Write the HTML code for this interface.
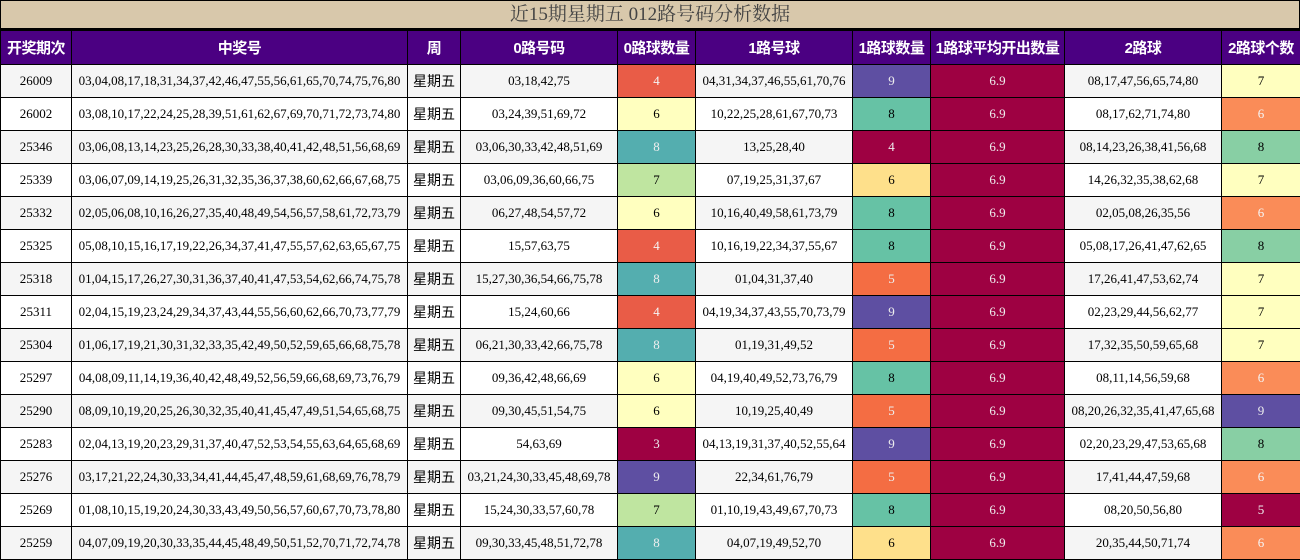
<!DOCTYPE html><html><head><meta charset="utf-8"><style>
body{margin:0;width:1300px;height:560px;overflow:hidden;background:#fff;font-family:"Liberation Serif","Noto Serif CJK SC",serif}
.t{background:#d8c8ab;border:1px solid #000;border-bottom:2px solid #000;box-sizing:border-box;height:30px;text-align:center;font-size:19px;line-height:28px;color:#444}
table{border-collapse:collapse;width:1300px;table-layout:fixed}
td,th{border:1px solid #000;text-align:center;font-size:13px;padding:0;height:32px;white-space:nowrap;overflow:hidden}
th{background:#4b0082;color:#fff;font-size:15px;font-family:"Liberation Sans","Noto Sans CJK SC",sans-serif;height:33px;letter-spacing:-0.5px}
tr:nth-child(even) td{background:#f5f5f5}
td.w{font-size:14px;font-family:"Liberation Sans","Noto Sans CJK SC",sans-serif}
.a{background:#9e0142!important;color:#eee}
.b{background:#e95c47!important;color:#f5f5f5}
.c{background:#ffffbf!important}
.d{background:#bfe5a0!important}
.e{background:#54aeaf!important;color:#eee}
.f{background:#5e4fa2!important;color:#eee}
.g{background:#f46d43!important;color:#eee}
.h{background:#fee08b!important}
.i{background:#66c2a5!important}
.j{background:#fa8c58!important;color:#f5f5f5}
.k{background:#88cfa4!important}
</style></head><body>
<div class="t">近15期星期五 012路号码分析数据</div>
<table>
<colgroup><col style="width:71px"><col style="width:336px"><col style="width:53px"><col style="width:157px"><col style="width:78px"><col style="width:157px"><col style="width:78px"><col style="width:134px"><col style="width:157px"><col style="width:79px"></colgroup>
<tr><th>开奖期次</th><th>中奖号</th><th>周</th><th>0路号码</th><th>0路球数量</th><th>1路号球</th><th>1路球数量</th><th>1路球平均开出数量</th><th>2路球</th><th>2路球个数</th></tr>
<tr><td>26009</td><td>03,04,08,17,18,31,34,37,42,46,47,55,56,61,65,70,74,75,76,80</td><td class="w">星期五</td><td>03,18,42,75</td><td class="b">4</td><td>04,31,34,37,46,55,61,70,76</td><td class="f">9</td><td class="a">6.9</td><td>08,17,47,56,65,74,80</td><td class="c">7</td></tr>
<tr><td>26002</td><td>03,08,10,17,22,24,25,28,39,51,61,62,67,69,70,71,72,73,74,80</td><td class="w">星期五</td><td>03,24,39,51,69,72</td><td class="c">6</td><td>10,22,25,28,61,67,70,73</td><td class="i">8</td><td class="a">6.9</td><td>08,17,62,71,74,80</td><td class="j">6</td></tr>
<tr><td>25346</td><td>03,06,08,13,14,23,25,26,28,30,33,38,40,41,42,48,51,56,68,69</td><td class="w">星期五</td><td>03,06,30,33,42,48,51,69</td><td class="e">8</td><td>13,25,28,40</td><td class="a">4</td><td class="a">6.9</td><td>08,14,23,26,38,41,56,68</td><td class="k">8</td></tr>
<tr><td>25339</td><td>03,06,07,09,14,19,25,26,31,32,35,36,37,38,60,62,66,67,68,75</td><td class="w">星期五</td><td>03,06,09,36,60,66,75</td><td class="d">7</td><td>07,19,25,31,37,67</td><td class="h">6</td><td class="a">6.9</td><td>14,26,32,35,38,62,68</td><td class="c">7</td></tr>
<tr><td>25332</td><td>02,05,06,08,10,16,26,27,35,40,48,49,54,56,57,58,61,72,73,79</td><td class="w">星期五</td><td>06,27,48,54,57,72</td><td class="c">6</td><td>10,16,40,49,58,61,73,79</td><td class="i">8</td><td class="a">6.9</td><td>02,05,08,26,35,56</td><td class="j">6</td></tr>
<tr><td>25325</td><td>05,08,10,15,16,17,19,22,26,34,37,41,47,55,57,62,63,65,67,75</td><td class="w">星期五</td><td>15,57,63,75</td><td class="b">4</td><td>10,16,19,22,34,37,55,67</td><td class="i">8</td><td class="a">6.9</td><td>05,08,17,26,41,47,62,65</td><td class="k">8</td></tr>
<tr><td>25318</td><td>01,04,15,17,26,27,30,31,36,37,40,41,47,53,54,62,66,74,75,78</td><td class="w">星期五</td><td>15,27,30,36,54,66,75,78</td><td class="e">8</td><td>01,04,31,37,40</td><td class="g">5</td><td class="a">6.9</td><td>17,26,41,47,53,62,74</td><td class="c">7</td></tr>
<tr><td>25311</td><td>02,04,15,19,23,24,29,34,37,43,44,55,56,60,62,66,70,73,77,79</td><td class="w">星期五</td><td>15,24,60,66</td><td class="b">4</td><td>04,19,34,37,43,55,70,73,79</td><td class="f">9</td><td class="a">6.9</td><td>02,23,29,44,56,62,77</td><td class="c">7</td></tr>
<tr><td>25304</td><td>01,06,17,19,21,30,31,32,33,35,42,49,50,52,59,65,66,68,75,78</td><td class="w">星期五</td><td>06,21,30,33,42,66,75,78</td><td class="e">8</td><td>01,19,31,49,52</td><td class="g">5</td><td class="a">6.9</td><td>17,32,35,50,59,65,68</td><td class="c">7</td></tr>
<tr><td>25297</td><td>04,08,09,11,14,19,36,40,42,48,49,52,56,59,66,68,69,73,76,79</td><td class="w">星期五</td><td>09,36,42,48,66,69</td><td class="c">6</td><td>04,19,40,49,52,73,76,79</td><td class="i">8</td><td class="a">6.9</td><td>08,11,14,56,59,68</td><td class="j">6</td></tr>
<tr><td>25290</td><td>08,09,10,19,20,25,26,30,32,35,40,41,45,47,49,51,54,65,68,75</td><td class="w">星期五</td><td>09,30,45,51,54,75</td><td class="c">6</td><td>10,19,25,40,49</td><td class="g">5</td><td class="a">6.9</td><td>08,20,26,32,35,41,47,65,68</td><td class="f">9</td></tr>
<tr><td>25283</td><td>02,04,13,19,20,23,29,31,37,40,47,52,53,54,55,63,64,65,68,69</td><td class="w">星期五</td><td>54,63,69</td><td class="a">3</td><td>04,13,19,31,37,40,52,55,64</td><td class="f">9</td><td class="a">6.9</td><td>02,20,23,29,47,53,65,68</td><td class="k">8</td></tr>
<tr><td>25276</td><td>03,17,21,22,24,30,33,34,41,44,45,47,48,59,61,68,69,76,78,79</td><td class="w">星期五</td><td>03,21,24,30,33,45,48,69,78</td><td class="f">9</td><td>22,34,61,76,79</td><td class="g">5</td><td class="a">6.9</td><td>17,41,44,47,59,68</td><td class="j">6</td></tr>
<tr><td>25269</td><td>01,08,10,15,19,20,24,30,33,43,49,50,56,57,60,67,70,73,78,80</td><td class="w">星期五</td><td>15,24,30,33,57,60,78</td><td class="d">7</td><td>01,10,19,43,49,67,70,73</td><td class="i">8</td><td class="a">6.9</td><td>08,20,50,56,80</td><td class="a">5</td></tr>
<tr><td>25259</td><td>04,07,09,19,20,30,33,35,44,45,48,49,50,51,52,70,71,72,74,78</td><td class="w">星期五</td><td>09,30,33,45,48,51,72,78</td><td class="e">8</td><td>04,07,19,49,52,70</td><td class="h">6</td><td class="a">6.9</td><td>20,35,44,50,71,74</td><td class="j">6</td></tr>
</table></body></html>
